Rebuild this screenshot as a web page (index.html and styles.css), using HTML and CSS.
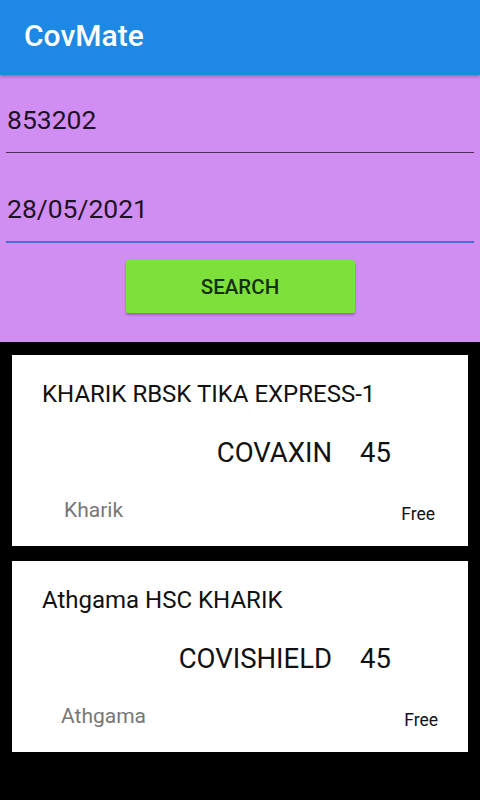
FILE: index.html
```html
<!DOCTYPE html>
<html lang="en">
<head>
<meta charset="utf-8">
<title>CovMate</title>
<link rel="stylesheet" href="styles.css">
</head>
<body>
<header class="appbar"><h1 class="appbar-title">CovMate</h1></header>
<section class="search">
  <div class="field"><span class="field-text">853202</span></div>
  <div class="field field-focused"><span class="field-text">28/05/2021</span></div>
  <button class="search-btn" type="button">SEARCH</button>
</section>
<main class="list">
  <article class="card">
    <div class="card-title">KHARIK RBSK TIKA EXPRESS-1</div>
    <div class="card-vaccine"><span class="vaccine-name">COVAXIN</span><span class="vaccine-age">45</span></div>
    <div class="card-foot"><span class="place">Kharik</span><span class="fee">Free</span></div>
  </article>
  <article class="card">
    <div class="card-title">Athgama HSC KHARIK</div>
    <div class="card-vaccine"><span class="vaccine-name">COVISHIELD</span><span class="vaccine-age">45</span></div>
    <div class="card-foot"><span class="place place-alt">Athgama</span><span class="fee fee-alt">Free</span></div>
  </article>
</main>
</body>
</html>
```

FILE: styles.css
```css
* { box-sizing: border-box; }
html, body { margin: 0; padding: 0; }
body {
  width: 480px;
  min-height: 800px;
  background: #000;
  font-family: Roboto, "Noto Sans", "Liberation Sans", sans-serif;
}
.appbar {
  height: 75px;
  background: #1E88E5;
  padding: 21px 0 0 24px;
  box-shadow: 0 2px 3px rgba(0,0,0,0.25);
  position: relative;
  z-index: 1;
}
.appbar-title {
  margin: 0;
  font-size: 30px;
  line-height: 30px;
  font-weight: 500;
  color: #fff;
}
.search {
  background: #D18EF2;
  height: 267px;
  padding: 0 6px;
  display: flex;
  flex-direction: column;
}
.field {
  padding: 31px 0 19px 1px;
  border-bottom: 1px solid #4e2f5e;
}
.field-focused {
  padding-top: 42px;
  border-bottom: 2px solid #4270E0;
}
.field-text {
  display: block;
  font-size: 26.5px;
  line-height: 27px;
  color: #1e1226;
}
.search-btn {
  align-self: center;
  margin-top: 17px;
  width: 229px;
  height: 53px;
  border: none;
  border-radius: 2px;
  background: #7EE03A;
  box-shadow: 0 2px 3px rgba(0,0,0,0.3);
  font-family: Roboto, "Noto Sans", sans-serif;
  font-weight: 500;
  font-size: 20.5px;
  color: #143010;
  padding: 0;
}
.list {
  padding: 13px 12px 0;
  display: flex;
  flex-direction: column;
  gap: 15px;
}
.card {
  background: #fff;
  height: 191px;
  padding: 27px 0 0 30px;
  color: #111;
}
.card-title {
  font-size: 24px;
  line-height: 24px;
}
.card-vaccine {
  margin-top: 33px;
  display: flex;
  justify-content: flex-end;
  gap: 28px;
  padding-right: 77px;
  font-size: 27.5px;
  line-height: 27px;
}
.card-foot {
  margin-top: 34px;
  display: flex;
  justify-content: space-between;
  align-items: flex-start;
  padding-right: 33px;
}
.place {
  margin-left: 22px;
  font-size: 21px;
  line-height: 20px;
  color: #777;
}
.place-alt { margin-left: 19px; }
.fee {
  margin-top: 6px;
  font-size: 17.5px;
  line-height: 17px;
  color: #111;
}
.fee-alt { margin-right: -3px; }
```
